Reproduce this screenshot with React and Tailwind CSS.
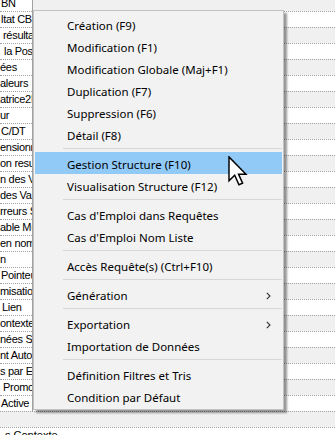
import React from 'react';

const rows = [
  { t: 'BN', pl: 1 },
  { t: 'ltat CB', pl: 1 },
  { t: 'résultat', pl: 3 },
  { t: 'la Position', pl: 4 },
  { t: 'ées', pl: 0 },
  { t: 'aleurs', pl: 0 },
  { t: 'atrice2D', pl: 0 },
  { t: 'ur', pl: 0 },
  { t: 'C/DT', pl: 1 },
  { t: 'ensionnel', pl: 0 },
  { t: 'on resultat', pl: 0 },
  { t: 'n des Valeurs', pl: 0 },
  { t: 'des Variables', pl: 0 },
  { t: 'rreurs Saisie', pl: 0 },
  { t: 'able Multiple', pl: 0 },
  { t: 'en nom', pl: 0 },
  { t: 'n', pl: 0 },
  { t: 'Pointeur', pl: 1 },
  { t: 'misation', pl: 0 },
  { t: 'Lien', pl: 2 },
  { t: 'ontexte', pl: 0 },
  { t: 'nées Saisies', pl: 0 },
  { t: 'nt Auto', pl: 0 },
  { t: 's par Erreur', pl: 0 },
  { t: 'Promo', pl: 3 },
  { t: 'Active', pl: 1 },
];

const menu = [
  { label: 'Création (F9)' },
  { label: 'Modification (F1)' },
  { label: 'Modification Globale (Maj+F1)' },
  { label: 'Duplication (F7)' },
  { label: 'Suppression (F6)' },
  { label: 'Détail (F8)' },
  { sep: true },
  { label: 'Gestion Structure (F10)', active: true },
  { label: 'Visualisation Structure (F12)' },
  { sep: true },
  { label: "Cas d'Emploi dans Requêtes" },
  { label: "Cas d'Emploi Nom Liste" },
  { sep: true },
  { label: 'Accès Requête(s) (Ctrl+F10)' },
  { sep: true },
  { label: 'Génération', sub: true },
  { sep: true },
  { label: 'Exportation', sub: true },
  { label: 'Importation de Données' },
  { sep: true },
  { label: 'Définition Filtres et Tris' },
  { label: 'Condition par Défaut' },
];

const Chevron = () => (
  <svg width="5" height="8" viewBox="0 0 5 8" className="shrink-0">
    <path d="M0.8 0.8 L4 4 L0.8 7.2" fill="none" stroke="#333" strokeWidth="1.1" />
  </svg>
);

const Cursor = () => (
  <svg width="20" height="30" viewBox="0 0 13.5 20.5">
    <path
      d="M0.6 0.6 L0.6 17 L4.5 13.2 L7.4 19.6 L9.9 18.5 L7.1 12.4 L12.2 12.4 Z"
      fill="#fff"
      stroke="#000"
      strokeWidth="1"
      strokeLinejoin="miter"
    />
  </svg>
);

export default function App() {
  return (
    <div className="relative w-[335px] h-[435px] overflow-hidden bg-white font-['Liberation_Sans',Arial,sans-serif] text-[11px] text-black">
      {/* liste en arrière-plan */}
      <div className="-mt-[5px]">
        {rows.map((r, i) => (
          <div key={i} className="flex h-4">
            <div className="w-[33px] shrink-0 border-r border-[#a0a0a0] bg-white">
              <div
                className="h-full border-t border-dotted border-[#a0a0a0] overflow-hidden whitespace-nowrap leading-[15px] tracking-[-0.3px]"
                style={{ paddingLeft: r.pl }}
              >
                {r.t}
              </div>
            </div>
            <div className={`flex-1 border-t border-dotted border-[#a0a0a0] ${i % 2 === 0 ? 'bg-[#f0f0f0]' : 'bg-white'}`} />
          </div>
        ))}
        <div className="h-4 border-t border-dotted border-[#a0a0a0] bg-[#f0f0f0]" />
        <div className="h-4 border-t border-dotted border-[#a0a0a0] bg-white pl-[5px] leading-[15px] whitespace-nowrap">
          s Contexte
        </div>
      </div>

      {/* menu contextuel */}
      <div className="absolute left-[33px] top-[10px] w-[251px] border border-[#c2c2c2] bg-[#f2f2f2] px-px py-[2px] shadow-[3px_3px_2px_rgba(0,0,0,0.4)] font-['Noto_Sans',sans-serif] text-[11.5px] text-black">
        {menu.map((m, i) =>
          m.sep ? (
            <div key={i} className="h-[7px] flex items-center">
              <div className="ml-[28px] h-px flex-1 bg-[#d7d7d7]" />
            </div>
          ) : (
            <div
              key={i}
              className={`h-[22px] flex items-center justify-between pl-[32px] pr-[11px] pt-[3px] whitespace-nowrap ${m.active ? 'bg-[#91c9f7]' : ''}`}
            >
              <span>{m.label}</span>
              {m.sub && <Chevron />}
            </div>
          )
        )}
      </div>

      <div className="absolute left-[228px] top-[156px]">
        <Cursor />
      </div>
    </div>
  );
}
